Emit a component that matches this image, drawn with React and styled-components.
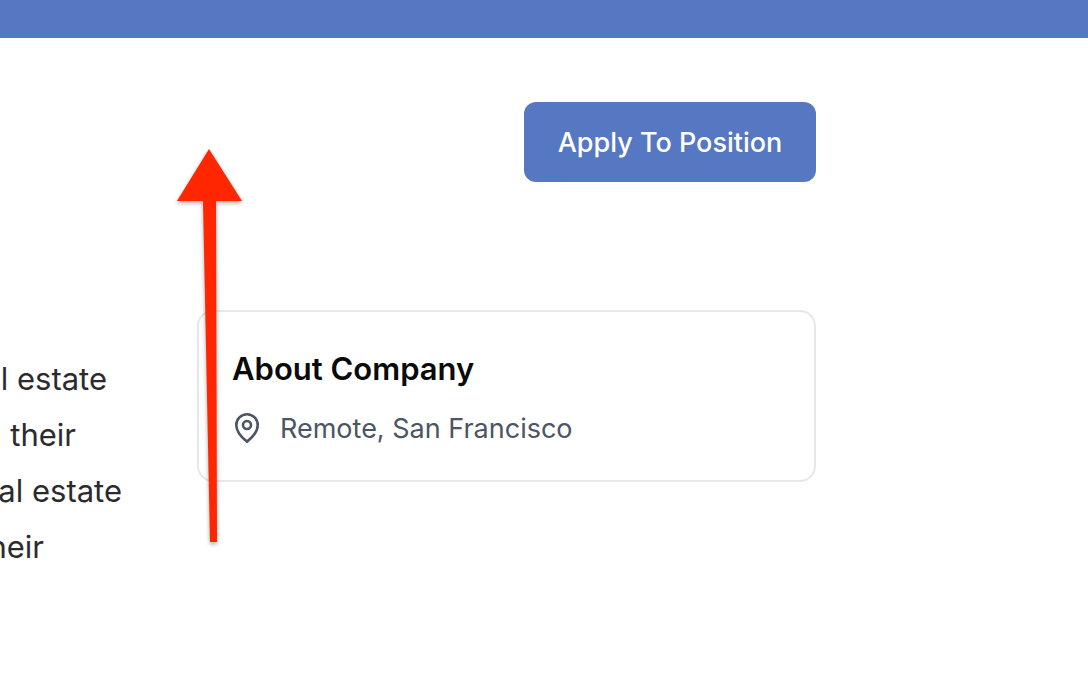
import React from "react";
import styled, { createGlobalStyle } from "styled-components";

const GlobalStyle = createGlobalStyle`
  *, *::before, *::after { box-sizing: border-box; }
  body {
    margin: 0;
    background: #fff;
    color: #0a0a0a;
    font-family: Inter, "Liberation Sans", sans-serif;
  }
`;

const Page = styled.div`
  position: relative;
  min-height: 100vh;
  overflow: hidden;
`;

const TopBar = styled.header`
  height: 38px;
  background: #5677c2;
`;

const Content = styled.main`
  padding: 64px 25% 64px 0;
`;

const Actions = styled.div`
  display: flex;
  justify-content: flex-end;
  margin-bottom: 128px;
`;

const ApplyButton = styled.button`
  min-width: 292px;
  height: 80px;
  padding: 2px 32px 0;
  border: 0;
  border-radius: 12px;
  background: #5677c2;
  color: #fff;
  font: inherit;
  font-size: 27px;
  font-weight: 500;
  line-height: 40px;
  cursor: pointer;
`;

const Columns = styled.div`
  display: grid;
  grid-template-columns: 197px 1fr;
  align-items: start;
`;

const Description = styled.div`
  padding-top: 41px;
  color: #2b2b2e;
  font-size: 31px;
  line-height: 56px;
`;

const Line = styled.div`
  display: flex;
  justify-content: flex-end;
  width: ${({ $end }) => $end}px;
  white-space: nowrap;
`;

const Card = styled.section`
  padding: 33px 33px 31px;
  border: 2px solid #e5e7eb;
  border-radius: 16px;
`;

const CardTitle = styled.h2`
  margin: 0 0 16px;
  color: #0a0a0a;
  font-size: 31px;
  font-weight: 600;
  line-height: 48px;
`;

const Location = styled.div`
  display: flex;
  align-items: center;
  gap: 16px;
  color: #4b5563;
  font-size: 27px;
  line-height: 40px;
`;

const Arrow = styled.svg`
  position: absolute;
  top: 140px;
  left: 170px;
  pointer-events: none;
  filter: drop-shadow(0 2px 2px rgba(0, 0, 0, 0.35));
`;

const lines = [
  { text: "l estate", end: 107 },
  { text: "their", end: 76 },
  { text: "al estate", end: 122 },
  { text: "their", end: 44 },
];

function PinIcon() {
  return (
    <svg width="32" height="32" viewBox="0 0 32 32" fill="none" stroke="currentColor" strokeWidth="2.6" aria-hidden="true">
      <path strokeLinejoin="round" d="M15 28.6C11 25.5 4.3 19 4.3 12a10.7 10.7 0 0 1 21.4 0C25.7 19 19 25.5 15 28.6Z" />
      <circle cx="15" cy="12" r="4" />
    </svg>
  );
}

export default function App() {
  return (
    <>
      <GlobalStyle />
      <Page>
        <TopBar />
        <Content>
          <Actions>
            <ApplyButton type="button">Apply To Position</ApplyButton>
          </Actions>
          <Columns>
            <Description>
              {lines.map((line, i) => (
                <Line key={i} $end={line.end}>{line.text}</Line>
              ))}
            </Description>
            <Card>
              <CardTitle>About Company</CardTitle>
              <Location>
                <PinIcon />
                <span>Remote, San Francisco</span>
              </Location>
            </Card>
          </Columns>
        </Content>
        <Arrow width="80" height="410" viewBox="0 0 80 410" aria-hidden="true">
          <path fill="#ff2600" d="M39 9 72 61H46L47 402H40L33 61H7Z" />
        </Arrow>
      </Page>
    </>
  );
}
